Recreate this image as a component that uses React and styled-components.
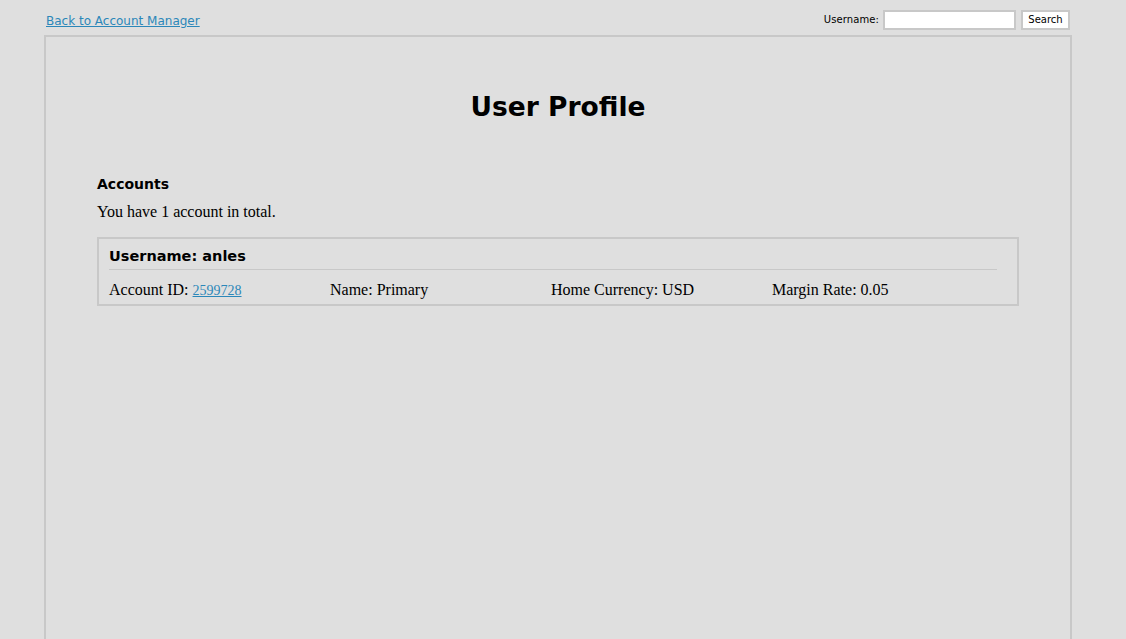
import React from "react";
import styled, { createGlobalStyle } from "styled-components";

const Global = createGlobalStyle`
  html, body { margin: 0; padding: 0; background: #dfdfdf; }
  body { font-family: "DejaVu Sans", Verdana, sans-serif; color: #000; }
`;

const Wrapper = styled.div`
  margin-left: 44px;
  width: 1028px;
`;

const TopBar = styled.div`
  height: 35px;
  padding: 0 2px;
  display: flex;
  align-items: center;
  justify-content: space-between;
`;

const BackLink = styled.a`
  font-size: 12px;
  color: #2b87b9;
  text-decoration: underline;
  margin-top: 6px;
`;

const SearchForm = styled.form`
  display: flex;
  align-items: center;
  gap: 4px;
  font-size: 10px;
  margin-top: 4px;
`;

const Label = styled.label`
  font-size: 10px;
  letter-spacing: 0.1px;
`;

const Input = styled.input`
  width: 129px;
  height: 16px;
  border: 2px solid #c8c8c8;
  background: #fff;
  padding: 0;
  margin: 0 1px 0 0;
`;

const Button = styled.button`
  height: 20px;
  width: 49px;
  border: 2px solid #c8c8c8;
  background: #fff;
  font-family: "DejaVu Sans", Verdana, sans-serif;
  font-size: 10px;
  padding: 0;
  margin: 0;
`;

const Panel = styled.div`
  border: 2px solid #c8c8c8;
  border-bottom: none;
  min-height: 610px;
  padding: 0 51px;
`;

const Title = styled.h1`
  margin: 52px 0 0;
  text-align: center;
  font-size: 26.5px;
  font-weight: bold;
  line-height: 36px;
`;

const SectionTitle = styled.h3`
  margin: 49px 0 0;
  font-size: 14px;
  font-weight: bold;
  line-height: 20px;
`;

const Para = styled.p`
  margin: 8px 0 0;
  font-family: "Liberation Serif", "Times New Roman", serif;
  font-size: 16px;
  line-height: 20px;
`;

const AccountBox = styled.div`
  margin-top: 15px;
  border: 2px solid #c8c8c8;
  padding: 0 20px 0 10px;
`;

const BoxHeader = styled.h4`
  margin: 0;
  padding: 7px 0 3px;
  font-size: 14.5px;
  font-weight: bold;
  line-height: 20px;
  border-bottom: 1px solid #c8c8c8;
`;

const Row = styled.div`
  display: grid;
  grid-template-columns: repeat(4, 221px);
  padding: 10px 0 3px;
  font-family: "Liberation Serif", "Times New Roman", serif;
  font-size: 16px;
  line-height: 20px;
`;

const Cell = styled.div``;

const IdLink = styled.a`
  color: #2b87b9;
  font-size: 14px;
  text-decoration: underline;
`;

export default function App() {
  return (
    <>
      <Global />
      <Wrapper>
        <TopBar>
          <BackLink href="#">Back to Account Manager</BackLink>
          <SearchForm onSubmit={(e) => e.preventDefault()}>
            <Label>Username:</Label>
            <Input type="text" />
            <Button type="submit">Search</Button>
          </SearchForm>
        </TopBar>
        <Panel>
          <Title>User Profile</Title>
          <SectionTitle>Accounts</SectionTitle>
          <Para>You have 1 account in total.</Para>
          <AccountBox>
            <BoxHeader>Username: anles</BoxHeader>
            <Row>
              <Cell>
                Account ID: <IdLink href="#">2599728</IdLink>
              </Cell>
              <Cell>Name: Primary</Cell>
              <Cell>Home Currency: USD</Cell>
              <Cell>Margin Rate: 0.05</Cell>
            </Row>
          </AccountBox>
        </Panel>
      </Wrapper>
    </>
  );
}
